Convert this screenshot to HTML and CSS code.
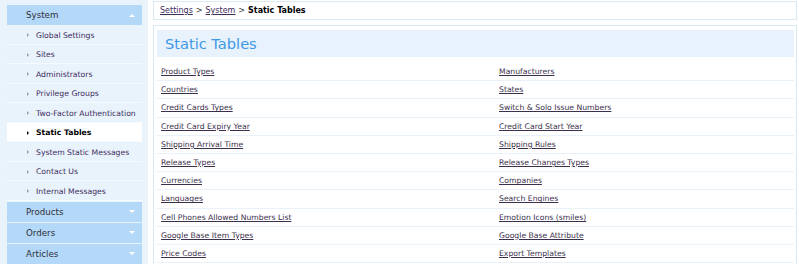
FILE: index.html
```html
<!DOCTYPE html>
<html>
<head>
<meta charset="utf-8">
<link rel="stylesheet" href="styles.css">
</head>
<body>
<div class="page">
  <aside class="sidebar">
    <div class="group">
      <div class="group-head"><span>System</span><span class="arrow up"></span></div>
      <ul class="items">
        <li><a href="#">Global Settings</a></li>
        <li><a href="#">Sites</a></li>
        <li><a href="#">Administrators</a></li>
        <li><a href="#">Privilege Groups</a></li>
        <li><a href="#">Two-Factor Authentication</a></li>
        <li class="active"><a href="#">Static Tables</a></li>
        <li><a href="#">System Static Messages</a></li>
        <li><a href="#">Contact Us</a></li>
        <li><a href="#">Internal Messages</a></li>
      </ul>
    </div>
    <div class="group"><div class="group-head"><span>Products</span><span class="arrow down"></span></div></div>
    <div class="group"><div class="group-head"><span>Orders</span><span class="arrow down"></span></div></div>
    <div class="group"><div class="group-head"><span>Articles</span><span class="arrow down"></span></div></div>
  </aside>
  <main class="main">
    <div class="crumbs"><a href="#">Settings</a> &gt; <a href="#">System</a> &gt; <b>Static Tables</b></div>
    <section class="box">
      <h1 class="title">Static Tables</h1>
      <div class="grid">
        <div class="cell"><a href="#">Product Types</a></div><div class="cell right"><a href="#">Manufacturers</a></div>
        <div class="cell"><a href="#">Countries</a></div><div class="cell right"><a href="#">States</a></div>
        <div class="cell"><a href="#">Credit Cards Types</a></div><div class="cell right"><a href="#">Switch &amp; Solo Issue Numbers</a></div>
        <div class="cell"><a href="#">Credit Card Expiry Year</a></div><div class="cell right"><a href="#">Credit Card Start Year</a></div>
        <div class="cell"><a href="#">Shipping Arrival Time</a></div><div class="cell right"><a href="#">Shipping Rules</a></div>
        <div class="cell"><a href="#">Release Types</a></div><div class="cell right"><a href="#">Release Changes Types</a></div>
        <div class="cell"><a href="#">Currencies</a></div><div class="cell right"><a href="#">Companies</a></div>
        <div class="cell"><a href="#">Languages</a></div><div class="cell right"><a href="#">Search Engines</a></div>
        <div class="cell"><a href="#">Cell Phones Allowed Numbers List</a></div><div class="cell right"><a href="#">Emotion Icons (smiles)</a></div>
        <div class="cell"><a href="#">Google Base Item Types</a></div><div class="cell right"><a href="#">Google Base Attribute</a></div>
        <div class="cell"><a href="#">Price Codes</a></div><div class="cell right"><a href="#">Export Templates</a></div>
      </div>
    </section>
  </main>
</div>
</body>
</html>
```
FILE: styles.css
```css
* { box-sizing: border-box; }
html, body { margin: 0; padding: 0; background: #ffffff; }
body { font-family: "DejaVu Sans", Verdana, sans-serif; font-size: 7.7px; color: #333; overflow: hidden; height: 264px; }
.page { display: flex; align-items: stretch; height: 264px; }
.sidebar { width: 148px; flex: none; background: #e9f3fc; padding: 5px 6px 0 7px; }
.group { margin-bottom: 1px; }
.group-head {
  height: 20px; background: #b4d9f8; display: flex; align-items: center; justify-content: space-between;
  padding: 0 7px 0 19px; font-size: 8.7px; color: #2f2f3a;
}
.arrow { width: 0; height: 0; border-left: 3.5px solid transparent; border-right: 3.5px solid transparent; }
.arrow.up { border-bottom: 3.5px solid #ffffff; }
.arrow.down { border-top: 3.5px solid #ffffff; }
.items { list-style: none; margin: 0; padding: 0; }
.items li { height: 19.5px; border-bottom: 1px solid #f6fbff; display: flex; align-items: center; padding: 2px 0 0 20px; }
.items li::before {
  content: ""; width: 0; height: 0; border-top: 2px solid transparent; border-bottom: 2px solid transparent;
  border-left: 2px solid #9a9aa6; margin-right: 7px;
}
.items li a { color: #3d2c5c; text-decoration: none; }
.items li.active { background: #ffffff; }
.items li.active a { color: #000; font-weight: bold; }
.items li.active::before { border-left-color: #000; }
.main { flex: 1; margin-left: 5px; margin-right: 2px; }
.crumbs {
  margin-top: 1px; height: 19px; border: 1px solid #d9eaf3; display: flex; align-items: center; gap: 3px;
  padding-left: 6px; font-size: 8px; color: #333;
}
.crumbs a { color: #3d2c5c; }
.crumbs b { color: #000; }
.box { margin-top: 5px; border: 1px solid #d9eaf3; border-bottom: none; padding: 4px 2px 0 3px; height: 240px; }
.title {
  margin: 0; height: 27px; background: #e8f2fc; color: #3d98e6; font-weight: normal; font-size: 14.6px;
  display: flex; align-items: center; padding-left: 8px;
}
.grid { margin-top: 6px; display: grid; grid-template-columns: 338px 1fr; grid-auto-rows: 18.2px; }
.cell { border-bottom: 1px solid #eaf2f9; display: flex; align-items: center; padding-left: 4px; }
.cell a { color: #3a2f4c; text-decoration: underline; }
```
